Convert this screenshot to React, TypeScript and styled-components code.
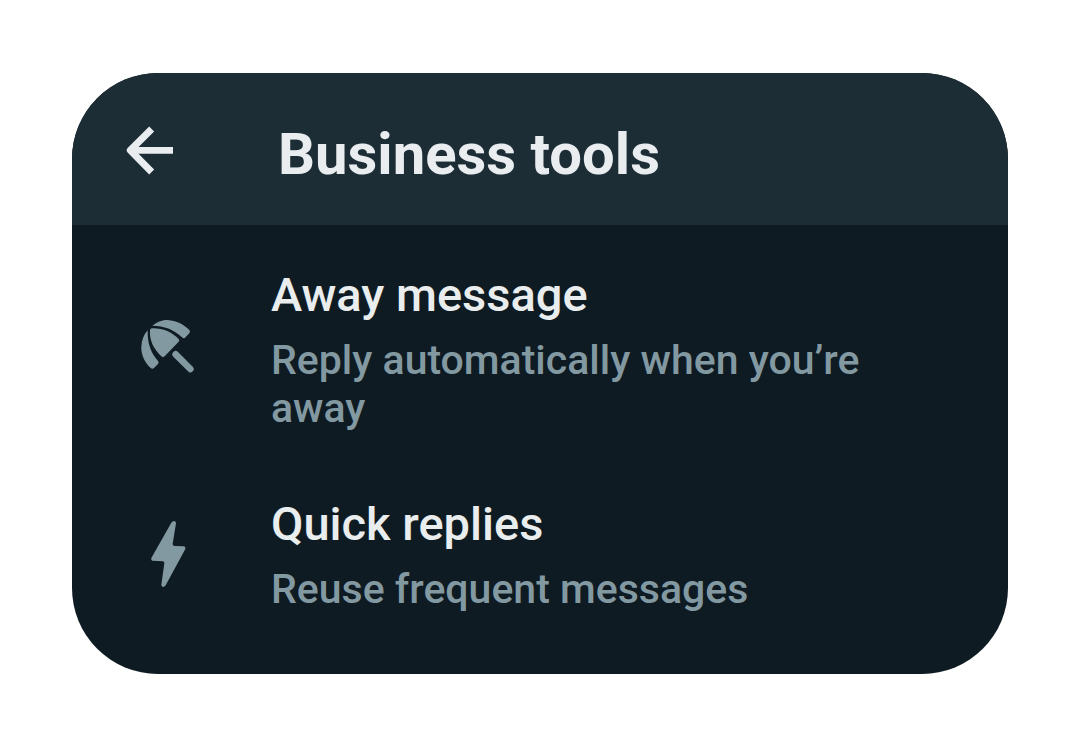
import React from "react";
import styled, { createGlobalStyle } from "styled-components";

const GlobalStyle = createGlobalStyle`
  * { box-sizing: border-box; }
  body { margin: 0; background: #ffffff; font-family: Roboto, "Liberation Sans", sans-serif; }
`;

const Page = styled.main`
  padding: 73px 72px 77px;
`;

const Card = styled.section`
  overflow: hidden;
  border-radius: 86px;
  background: #0f1b22;
`;

const Header = styled.header`
  display: flex;
  align-items: center;
  min-height: 152px;
  padding: 0 48px;
  background: #1d2d35;
`;

const BackButton = styled.button`
  display: flex;
  flex: none;
  width: 158px;
  padding: 2px 0 0 4px;
  border: 0;
  background: none;
  cursor: pointer;
`;

const Title = styled.h1`
  margin: 10px 0 0;
  color: #e9edf0;
  font-size: 58px;
  font-weight: 700;
  line-height: 72px;
`;

const ToolList = styled.ul`
  display: grid;
  gap: 66px;
  margin: 0;
  padding: 44px 48px 61px;
  list-style: none;
`;

const Tool = styled.li`
  display: flex;
  align-items: center;
`;

const IconSlot = styled.span`
  display: flex;
  flex: none;
  justify-content: center;
  width: 96px;
  margin-right: 55px;
`;

const ToolText = styled.div`
  max-width: 600px;
`;

const ToolName = styled.h2`
  margin: 0 0 15px;
  color: #e9edee;
  font-size: 47px;
  font-weight: 500;
  line-height: 52px;
`;

const ToolDetail = styled.p`
  margin: 0;
  color: #8399a2;
  font-size: 41px;
  font-weight: 500;
  line-height: 48px;
`;

const ArrowIcon = () => (
  <svg width="52" height="52" viewBox="42 42 156 156" fill="none" stroke="#e9edf0" aria-hidden="true">
    <path d="M125 57L61 121L125 186" strokeWidth="21" strokeLinejoin="round" />
    <path d="M62 121H189" strokeWidth="20" />
  </svg>
);

const UmbrellaIcon = () => (
  <svg width="56" height="64" viewBox="30 26 168 192" fill="#8399a2" aria-hidden="true">
    <path d="M67 46C84 33 97 29 113 29C139 31 162 42 178 59Q182 64 178 69L165 82Q161 86 156 81C130 56 103 47 67 46Z" />
    <path d="M66 54C98 53 125 65 146 86Q150 90 146 94L104 138Q99 143 94 138C71 116 58 91 60 60Q60 54 66 54Z" />
    <path d="M53 60C52 98 62 128 84 152Q88 157 84 161L72 173Q67 177 62 173C43 154 33 133 34 109C35 89 41 74 53 60Z" />
    <path d="M137 132L181 176" fill="none" stroke="#8399a2" strokeWidth="20" strokeLinecap="round" />
  </svg>
);

const BoltIcon = () => (
  <svg width="36" height="72" viewBox="45 30 108 216" fill="#8399a2" aria-hidden="true">
    <path d="M109 38Q112 33 118 33Q123 34 123 40L113 102Q113 108 119 108L147 109Q153 111 151 117L92 226Q89 231 84 231Q79 230 79 224L88 160Q89 154 83 154L52 152Q47 150 49 144Z" />
  </svg>
);

const tools = [
  { name: "Away message", detail: "Reply automatically when you’re away", Icon: UmbrellaIcon },
  { name: "Quick replies", detail: "Reuse frequent messages", Icon: BoltIcon },
];

export default function App() {
  return (
    <>
      <GlobalStyle />
      <Page>
        <Card>
          <Header>
            <BackButton type="button" aria-label="Back">
              <ArrowIcon />
            </BackButton>
            <Title>Business tools</Title>
          </Header>
          <ToolList>
            {tools.map(({ name, detail, Icon }) => (
              <Tool key={name}>
                <IconSlot>
                  <Icon />
                </IconSlot>
                <ToolText>
                  <ToolName>{name}</ToolName>
                  <ToolDetail>{detail}</ToolDetail>
                </ToolText>
              </Tool>
            ))}
          </ToolList>
        </Card>
      </Page>
    </>
  );
}
